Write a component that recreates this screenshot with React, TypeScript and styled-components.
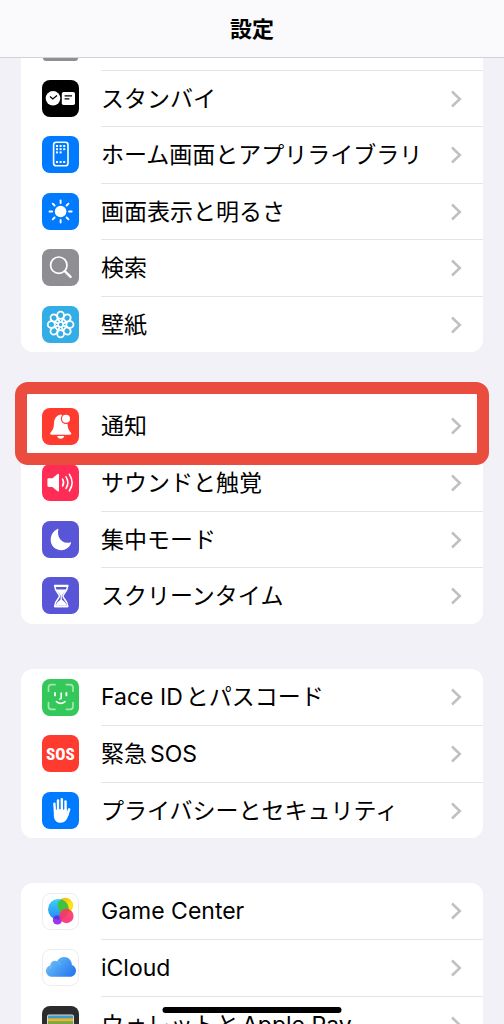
import React from "react";
import styled, { createGlobalStyle, css } from "styled-components";

const GlobalStyle = createGlobalStyle`
  * { box-sizing: border-box; }
  body {
    margin: 0;
    background: #f2f1f7;
    color: #000;
    font-family: Inter, "Noto Sans CJK JP", sans-serif;
  }
`;

const Screen = styled.div`
  height: 100vh;
  overflow: hidden;
  display: flex;
  flex-direction: column;
`;

const Header = styled.header`
  flex: none;
  height: 58px;
  display: flex;
  align-items: center;
  justify-content: center;
  background: #fafafc;
  border-bottom: 1px solid #d2d2d5;
`;

const Title = styled.h1`
  margin: 0;
  font-size: 22px;
  line-height: 32px;
  font-weight: 700;
`;

const Content = styled.main`
  flex: 1;
  min-height: 0;
  padding: 0 21px;
`;

const Group = styled.section<{ $continued?: boolean }>`
  margin-bottom: ${(p) => (p.$continued ? 46 : 45)}px;
  background: #fff;
  border-radius: ${(p) => (p.$continued ? "0 0 12px 12px" : "12px")};
`;

const ScrolledRow = styled.div`
  height: 12px;
  padding-left: 22px;
`;

const ScrolledIcon = styled.div`
  width: 35px;
  height: 3px;
  border-radius: 0 0 6px 6px;
  background: #8e8e93;
`;

const List = styled.ul`
  list-style: none;
  margin: 0;
  padding: 0;
`;

const Label = styled.span<{ $line?: boolean }>`
  flex: 1;
  align-self: stretch;
  display: flex;
  align-items: center;
  justify-content: space-between;
  padding-right: 20px;
  font-size: 23px;
  line-height: 32px;
  white-space: nowrap;
  border-top: ${(p) => (p.$line ? "1px solid #e4e4e6" : "0")};
`;

const Latin = styled.span<{ $gap?: "before" | "after" }>`
  padding-left: ${(p) => (p.$gap === "before" ? 3 : 0)}px;
  padding-right: ${(p) => (p.$gap === "after" ? 3 : 0)}px;
`;

const RowLink = styled.a`
  height: 100%;
  display: flex;
  align-items: flex-start;
  gap: 22px;
  padding-left: 21px;
  color: inherit;
  text-decoration: none;
`;

const Row = styled.li<{ $marked?: boolean }>`
  height: 56px;
  &:nth-child(even) { height: 57px; }
  ${(p) =>
    p.$marked &&
    css`
      position: relative;
      z-index: 1;
      &::before {
        content: "";
        position: absolute;
        z-index: -1;
        inset: -16px -6px -11px -6px;
        border: 12px solid #ea4d3e;
        border-radius: 13px;
        background: #fff;
      }
    `}
`;

const Tile = styled.svg`
  flex: none;
  width: 37px;
  height: 37px;
  margin-top: 10px;
  display: block;
`;

const HomeIndicator = styled.div`
  position: fixed;
  bottom: 11px;
  left: 50%;
  transform: translateX(-50%);
  width: 179px;
  height: 6px;
  border-radius: 3px;
  background: #000;
  z-index: 2;
`;

const Chevron = () => (
  <svg width="14" height="18" viewBox="0 0 14 18" aria-hidden="true">
    <path d="M3 1.5L10.8 9L3 16.5" fill="none" stroke="#c0c0c3" strokeWidth="2.5" />
  </svg>
);

type IconProps = { color: string; outlined?: boolean; children: React.ReactNode };

const AppIcon = ({ color, outlined, children }: IconProps) => (
  <Tile viewBox="0 0 37 37" aria-hidden="true">
    <rect
      x={outlined ? 0.5 : 0}
      y={outlined ? 0.5 : 0}
      width={outlined ? 36 : 37}
      height={outlined ? 36 : 37}
      rx="8"
      fill={color}
      stroke={outlined ? "#ececee" : "none"}
    />
    {children}
  </Tile>
);

const StandbyIcon = () => (
  <AppIcon color="#000">
    <circle cx="11" cy="18.3" r="7.3" fill="#fff" />
    <path d="M8 16.6L10.8 19L15 15.6" fill="none" stroke="#000" strokeWidth="1.3" />
    <rect x="19.8" y="12" width="13.2" height="13" rx="1.8" fill="#fff" />
    <path d="M22.6 15.8H30M22.6 18.8H27.4" stroke="#000" strokeWidth="1.2" />
  </AppIcon>
);

const dots = [
  [15, 10], [18.6, 10], [22.2, 10],
  [15, 13.2], [18.6, 13.2], [22.2, 13.2],
  [15, 16.4], [18.6, 16.4],
  [15, 26], [18.6, 26], [22.2, 26],
];

const HomeScreenIcon = () => (
  <AppIcon color="#007aff">
    <rect x="11.6" y="6.2" width="14.4" height="23.6" rx="2.6" fill="none" stroke="#fff" strokeWidth="1.6" />
    {dots.map(([x, y]) => (
      <rect key={`${x}-${y}`} x={x - 1} y={y - 1} width="2" height="2" fill="#fff" />
    ))}
  </AppIcon>
);

const BrightnessIcon = () => (
  <AppIcon color="#007aff">
    <circle cx="18.6" cy="18.5" r="5.8" fill="#fff" />
    {[0, 45, 90, 135, 180, 225, 270, 315].map((a) => (
      <path key={a} d="M18.6 10V7.4" stroke="#fff" strokeWidth="1.9" strokeLinecap="round" transform={`rotate(${a} 18.6 18.5)`} />
    ))}
  </AppIcon>
);

const SearchIcon = () => (
  <AppIcon color="#8e8e93">
    <circle cx="16.8" cy="16.2" r="8.2" fill="none" stroke="#fff" strokeWidth="1.7" />
    <path d="M22.8 22.2L28.6 27.8" stroke="#fff" strokeWidth="2.4" strokeLinecap="round" />
  </AppIcon>
);

const WallpaperIcon = () => (
  <AppIcon color="#32ade6">
    {[0, 45, 90, 135, 180, 225, 270, 315].map((a) => (
      <g key={a} transform={`rotate(${a} 18.6 18.5)`} fill="none" stroke="#fff" strokeWidth="1.8">
        <ellipse cx="18.6" cy="9.2" rx="3.4" ry="3.6" />
        <path d="M16.2 12.2L18.6 17.2L21 12.2" strokeWidth="1.2" />
      </g>
    ))}
    <circle cx="18.6" cy="18.5" r="2.4" fill="#32ade6" stroke="#fff" strokeWidth="1.3" />
  </AppIcon>
);

const BellIcon = () => (
  <AppIcon color="#ff3b30">
    <path
      d="M18.6 6.6C14.4 7.4 12.2 10.8 12 15.2C11.8 20 10.8 22 8.8 24.2C7.6 25.5 8 26.8 9.6 26.8H27.8C29.4 26.8 29.8 25.5 28.6 24.2C26.6 22 25.8 20 25.4 15.2C25 10.5 22.6 7.4 18.6 6.6Z"
      fill="#fff"
    />
    <path d="M15.2 28H22.2C21.8 29.8 20.5 30.8 18.7 30.8C16.9 30.8 15.6 29.8 15.2 28Z" fill="#fff" />
    <circle cx="24" cy="10.8" r="5.2" fill="#ff3b30" />
    <circle cx="24" cy="10.8" r="4" fill="#fff" />
  </AppIcon>
);

const SoundIcon = () => (
  <AppIcon color="#ff2d55">
    <path d="M6.8 14.2H10.4L15.6 10C16.4 9.4 17 9.8 17 10.7V26.5C17 27.4 16.4 27.8 15.6 27.2L10.4 23H6.8C5.9 23 5.4 22.5 5.4 21.6V15.6C5.4 14.7 5.9 14.2 6.8 14.2Z" fill="#fff" />
    <g fill="none" stroke="#fff" strokeWidth="1.6" strokeLinecap="round">
      <path d="M20.6 15.2Q22.6 18.6 20.6 22" />
      <path d="M24 12.8Q27.6 18.6 24 24.4" />
      <path d="M27.4 10.4Q32.8 18.6 27.4 26.8" />
    </g>
  </AppIcon>
);

const MoonIcon = () => (
  <AppIcon color="#5856d6">
    <path
      d="M16.4 8.2C14.6 14.8 18.8 23.4 28.2 21.4C28.9 21.2 29.3 21.6 29 22.3C27.4 26.6 23.7 29.2 19.3 29.2C13.2 29.2 8.7 24.8 8.7 18.8C8.7 14 11.4 9.8 15.6 7.9C16.2 7.6 16.6 7.7 16.4 8.2Z"
      fill="#fff"
    />
  </AppIcon>
);

const HourglassIcon = () => (
  <AppIcon color="#5856d6">
    <path
      d="M13 8.8H25.4V10C25.4 14.6 21 16.2 21 19C21 21.8 25.4 23.6 25.4 28V29.4H13V28C13 23.6 17.4 21.8 17.4 19C17.4 16.2 13 14.6 13 10Z"
      fill="none"
      stroke="#fff"
      strokeWidth="1.5"
      strokeLinejoin="round"
    />
    <path d="M12 7.8H26.4V10H12ZM12 28.2H26.4V30.2H12Z" fill="#fff" />
    <path d="M14.2 12.4H24.2C23.2 15 20.2 16.2 19.8 19V22C20.2 23.8 23.6 24.4 24.4 28H14C14.8 24.4 18.2 23.8 18.6 22V19C18.2 16.2 15.2 15 14.2 12.4Z" fill="#fff" />
  </AppIcon>
);

const FaceIcon = () => (
  <AppIcon color="#34c759">
    <path
      d="M6.5 12.2V8.6Q6.5 5.7 9.4 5.7H13M24.4 5.7H28Q31 5.7 31 8.6V12.2M31 23.6V27.4Q31 30.3 28 30.3H24.4M13 30.3H9.4Q6.5 30.3 6.5 27.4V23.6"
      fill="none"
      stroke="#a4e6b5"
      strokeWidth="1.7"
      strokeLinecap="round"
    />
    <g fill="none" stroke="#fff" strokeWidth="1.6" strokeLinecap="round">
      <path d="M13 14V16.4M24.4 14V16.4" strokeWidth="1.9" />
      <path d="M19.2 14V19Q19.2 20 17.8 20" />
      <path d="M14.4 22.6Q18.7 26.2 23 22.6" />
    </g>
  </AppIcon>
);

const SosIcon = () => (
  <AppIcon color="#ff3b30">
    <text x="18.5" y="25" textAnchor="middle" fill="#fff" fontFamily="'Roboto Condensed', Roboto, 'Liberation Sans', sans-serif" fontSize="17" fontWeight="800">
      SOS
    </text>
  </AppIcon>
);

const HandIcon = () => (
  <AppIcon color="#007aff">
    <g stroke="#fff" strokeWidth="2.5" strokeLinecap="round" fill="none">
      <path d="M12.4 11.8L13.2 20M16 8.4V19M19.8 7.2V19M23.5 9.4V20" />
      <path d="M27.2 17.4L24.8 24" strokeWidth="2.6" />
    </g>
    <path d="M11.8 17H24.7V22L27 20.4C26 24.6 24.6 30.8 18.6 30.8C13.8 30.8 11.8 27.4 11.8 23Z" fill="#fff" />
    <path d="M14.3 12V18M17.9 9.4V17.6M21.7 10V18" stroke="#007aff" strokeWidth="0.7" />
  </AppIcon>
);

const GameCenterIcon = () => (
  <AppIcon color="#fff" outlined>
    <defs>
      <linearGradient id="gc-blue" x1="0" y1="0" x2="0" y2="1">
        <stop offset="0" stopColor="#3fd0f8" />
        <stop offset="1" stopColor="#2585f4" />
      </linearGradient>
      <linearGradient id="gc-yellow" x1="0" y1="0" x2="1" y2="1">
        <stop offset="0" stopColor="#f9a01c" />
        <stop offset="0.6" stopColor="#fbe50a" />
      </linearGradient>
      <linearGradient id="gc-pink" x1="0" y1="0" x2="0" y2="1">
        <stop offset="0" stopColor="#fb3a55" />
        <stop offset="1" stopColor="#ff2d7c" />
      </linearGradient>
      <clipPath id="gc-clip">
        <circle cx="16.4" cy="16.4" r="10.4" />
      </clipPath>
    </defs>
    <circle cx="15.4" cy="27" r="4.6" fill="#9a35f3" />
    <circle cx="23.4" cy="12.6" r="7.8" fill="url(#gc-yellow)" />
    <circle cx="16.4" cy="16.4" r="10.4" fill="url(#gc-blue)" />
    <circle cx="23.4" cy="12.6" r="7.8" fill="#41c23f" clipPath="url(#gc-clip)" />
    <circle cx="15.4" cy="27" r="4.6" fill="#5b36e8" clipPath="url(#gc-clip)" />
    <circle cx="24.4" cy="23" r="7.2" fill="url(#gc-pink)" opacity="0.92" />
  </AppIcon>
);

const CloudIcon = () => (
  <AppIcon color="#fff" outlined>
    <defs>
      <linearGradient id="cloud-fill" x1="0" y1="0" x2="1" y2="0.6">
        <stop offset="0" stopColor="#7fc8f8" />
        <stop offset="0.5" stopColor="#4da3f5" />
        <stop offset="1" stopColor="#2a7df0" />
      </linearGradient>
    </defs>
    <path
      d="M10.6 27.8C6.8 27.8 4 25.2 4 21.9C4 19.2 5.7 17.1 8.2 16.4C8.4 13.6 10.4 11.8 13 11.8C13.9 11.8 14.5 12 15.1 12.3C16.4 9.6 19 8 22 8C26.4 8 29.8 11.4 29.9 16C32.4 16.8 34 19 34 21.8C34 25.2 31.4 27.8 28 27.8Z"
      fill="url(#cloud-fill)"
    />
    <path d="M15.1 12.3Q17.8 13.4 18.4 16M8.2 16.4Q7.8 18.4 9 20" fill="none" stroke="#8fcdfa" strokeWidth="0.8" opacity="0.6" />
  </AppIcon>
);

const WalletIcon = () => (
  <AppIcon color="#2c2c2e">
    <rect x="5" y="8.4" width="27" height="22" rx="2" fill="#dfd9cb" />
    <rect x="6" y="9.4" width="25" height="4" rx="1" fill="#3d9bd0" />
    <rect x="6" y="12.4" width="25" height="4" fill="#f5b324" />
    <rect x="6" y="15.2" width="25" height="3.4" fill="#5fb548" />
    <rect x="6" y="17.6" width="25" height="5" fill="#ee6a5b" />
    <path d="M5 21H13Q18.5 26 24 21H32V29Q32 30.4 30.4 30.4H6.6Q5 30.4 5 29Z" fill="#dfd9cb" />
  </AppIcon>
);

type Item = { id: string; label: React.ReactNode; icon: React.ReactNode; marked?: boolean };

const groups: Item[][] = [
  [
    { id: "standby", label: "スタンバイ", icon: <StandbyIcon /> },
    { id: "home", label: "ホーム画面とアプリライブラリ", icon: <HomeScreenIcon /> },
    { id: "display", label: "画面表示と明るさ", icon: <BrightnessIcon /> },
    { id: "search", label: "検索", icon: <SearchIcon /> },
    { id: "wallpaper", label: "壁紙", icon: <WallpaperIcon /> },
  ],
  [
    { id: "notifications", label: "通知", icon: <BellIcon />, marked: true },
    { id: "sounds", label: "サウンドと触覚", icon: <SoundIcon /> },
    { id: "focus", label: "集中モード", icon: <MoonIcon /> },
    { id: "screentime", label: "スクリーンタイム", icon: <HourglassIcon /> },
  ],
  [
    { id: "faceid", label: <><Latin $gap="after">Face ID</Latin>とパスコード</>, icon: <FaceIcon /> },
    { id: "sos", label: <>緊急<Latin $gap="before">SOS</Latin></>, icon: <SosIcon /> },
    { id: "privacy", label: "プライバシーとセキュリティ", icon: <HandIcon /> },
  ],
  [
    { id: "gamecenter", label: "Game Center", icon: <GameCenterIcon /> },
    { id: "icloud", label: "iCloud", icon: <CloudIcon /> },
    { id: "wallet", label: <>ウォレットと<Latin $gap="before">Apple Pay</Latin></>, icon: <WalletIcon /> },
  ],
];

export default function App() {
  return (
    <Screen>
      <GlobalStyle />
      <Header>
        <Title>設定</Title>
      </Header>
      <Content>
        {groups.map((items, g) => (
          <Group key={g} $continued={g === 0}>
            {g === 0 && (
              <ScrolledRow>
                <ScrolledIcon />
              </ScrolledRow>
            )}
            <List>
              {items.map((item, i) => (
                <Row key={item.id} $marked={item.marked}>
                  <RowLink href={`#${item.id}`}>
                    {item.icon}
                    <Label $line={g === 0 || i > 0}>
                      <span>{item.label}</span>
                      <Chevron />
                    </Label>
                  </RowLink>
                </Row>
              ))}
            </List>
          </Group>
        ))}
      </Content>
      <HomeIndicator />
    </Screen>
  );
}
